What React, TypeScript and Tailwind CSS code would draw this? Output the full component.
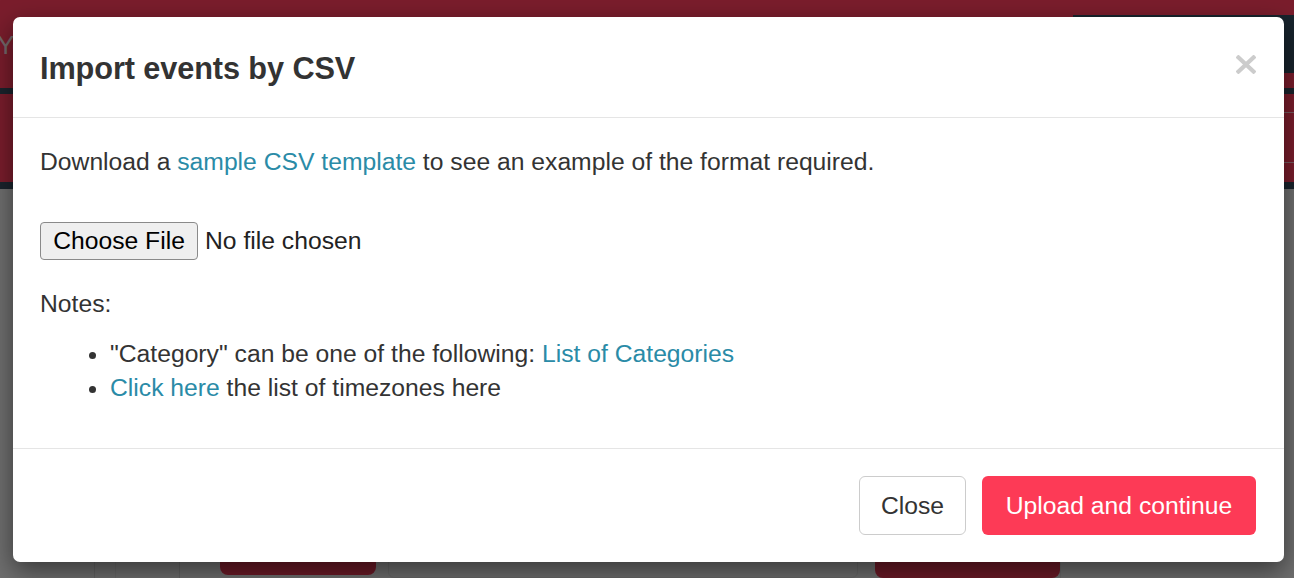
import { useState } from "react"

const FONT = "font-['Liberation_Sans','Helvetica_Neue',Arial,sans-serif]"
const LINK_CLASSNAME = "text-[#2a8ba7] hover:underline cursor-pointer"

const CloseIcon = () => (
  <svg width="20" height="19" viewBox="0 0 20 19" fill="none">
    <path d="M2.5 2.5 L17.5 16.5 M17.5 2.5 L2.5 16.5" stroke="#cccccc" strokeWidth="4.2" strokeLinecap="square" />
  </svg>
)

// what sits behind the backdrop
const PageBehind = () => (
  <div className="flex h-[578px] flex-col bg-[#dedede]">
    <div className="flex h-[88px] items-start bg-[#f43a58]">
      <span className="mt-[30px] -ml-[3px] text-[26px] leading-[30px] text-[#e6d2d5]">Your events</span>
      <div className="ml-auto mt-[15px] h-[58px] w-[221px] bg-[#30485a]" />
    </div>
    <div className="h-[6px] bg-[#34485a]" />
    <div className="flex h-[88px] justify-end bg-[#f43a58]">
      <div className="mt-[18px] h-[51px] w-[14px] border-y border-[#f0b8c2]" />
    </div>
    <div className="h-[7px] bg-[#34485a]" />
    <div className="flex flex-1 items-end">
      <div className="flex h-[38px] w-full">
        <div className="w-[95px] border-r border-[#c8c8c8]" />
        <div className="w-[21px] border-r border-[#d2d2d2]" />
        <div className="w-[64px] border-r border-[#c8c8c8]" />
        <div className="flex w-[208px] pl-[40px] pr-[12px]">
          <div className="mb-[3px] w-[156px] rounded-b-[8px] bg-[#d8344e]" />
        </div>
        <div className="w-[470px] rounded-[6px] border border-[#cfcfcf]" />
        <div className="flex w-[202px] pl-[17px]">
          <div className="w-[185px] rounded-b-[8px] bg-[#d8344e]" />
        </div>
        <div className="flex-1 border-l border-[#d0d0d0]" />
      </div>
    </div>
  </div>
)

export default function App() {
  const [fileName, setFileName] = useState<string | null>(null)

  return (
    <div className={`relative h-[578px] w-full overflow-hidden ${FONT}`}>
      <PageBehind />
      <div className="absolute inset-0 bg-black/50" />

      <div className="absolute left-[13px] top-[17px] w-[1271px] rounded-[7px] bg-white text-[24.7px] leading-[34px] text-[#333] shadow-[0_9px_26px_rgba(0,0,0,0.5)]">
        <div className="flex h-[101px] items-start justify-between border-b border-[#e5e5e5] pl-[27px] pr-[28px] pt-[30px]">
          <h4 className="text-[30.7px] font-bold leading-[44px] tracking-[-0.1px] text-[#333]">Import events by CSV</h4>
          <button type="button" className="mt-[8px] cursor-pointer">
            <CloseIcon />
          </button>
        </div>

        <div className="border-b border-[#e5e5e5] px-[27px] pb-[43px] pt-[27px]">
          <p>
            Download a <a className={LINK_CLASSNAME}>sample CSV template</a> to see an example of the format required.
          </p>

          <label className="mt-[43px] flex h-[38px] items-center">
            <input
              type="file"
              accept=".csv"
              className="sr-only"
              onChange={e => setFileName(e.target.files?.[0]?.name ?? null)}
            />
            <span className="flex h-[38px] w-[158px] items-center justify-center rounded-[4px] border border-[#8a8a8a] bg-[#efefef] text-black">
              Choose File
            </span>
            <span className="ml-[7px] text-[#222]">{fileName ?? "No file chosen"}</span>
          </label>

          <p className="mt-[27px]">Notes:</p>
          <ul className="mt-[16px] list-disc pl-[70px]">
            <li>
              "Category" can be one of the following: <a className={LINK_CLASSNAME}>List of Categories</a>
            </li>
            <li>
              <a className={LINK_CLASSNAME}>Click here</a> the list of timezones here
            </li>
          </ul>
        </div>

        <div className="flex justify-end gap-[16px] pb-[27px] pl-[27px] pr-[28px] pt-[27px]">
          <button
            type="button"
            className="h-[59px] w-[107px] cursor-pointer rounded-[6px] border border-[#cccccc] bg-white text-[#333]"
          >
            Close
          </button>
          <button
            type="button"
            className="h-[59px] w-[274px] cursor-pointer rounded-[6px] bg-[#fd3a56] text-white"
          >
            Upload and continue
          </button>
        </div>
      </div>
    </div>
  )
}
